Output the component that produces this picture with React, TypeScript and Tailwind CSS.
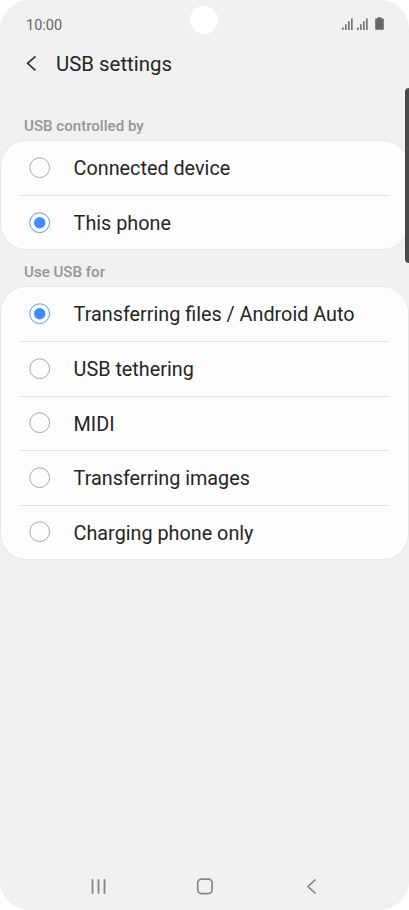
type Option = { label: string; selected?: boolean };

const controlledBy: Option[] = [
  { label: "Connected device" },
  { label: "This phone", selected: true },
];

const useFor: Option[] = [
  { label: "Transferring files / Android Auto", selected: true },
  { label: "USB tethering" },
  { label: "MIDI" },
  { label: "Transferring images" },
  { label: "Charging phone only" },
];

function Signal() {
  return (
    <svg width="11" height="12" viewBox="0 0 11 12" fill="#777777">
      <rect x="0" y="9.4" width="1.7" height="2.6" />
      <rect x="3" y="6.2" width="1.7" height="5.8" />
      <rect x="6" y="3.2" width="1.7" height="8.8" />
      <rect x="9" y="0.3" width="1.7" height="11.7" />
    </svg>
  );
}

function Battery() {
  return (
    <svg className="-mt-px" width="9" height="13" viewBox="0 0 9 13" fill="#666666">
      <path d="M2.4 0.3h4v1.200h1.6q.8 0 .8.8v9.700q0 .8-.8.8H1q-.8 0-.8-.8V2.300q0-.8.8-.8h1.4z" />
    </svg>
  );
}

function Radio({ selected }: { selected?: boolean }) {
  return (
    <svg width="22" height="22" viewBox="0 0 22 22" fill="none">
      <circle cx="10.7" cy="10.7" r="9.9" stroke={selected ? "#5b9bf0" : "#a6a6a6"} strokeWidth="1" />
      {selected && <circle cx="10.7" cy="10.7" r="5.7" fill="#3f8dfb" />}
    </svg>
  );
}

function Group({ options }: { options: Option[] }) {
  return (
    <ul className="mx-px rounded-[25px] bg-[#fdfdfd] px-[19px] shadow-[0_0_0_1px_#e8e8e8]">
      {options.map((o, i) => (
        <li
          key={o.label}
          className={`flex h-[54.4px] items-center gap-[22.6px] pl-[9px] ${i > 0 ? "border-t border-[#e2e2e2]" : ""}`}
        >
          <Radio selected={o.selected} />
          <span className="pt-[2.6px] text-[19.8px] leading-6 whitespace-nowrap text-[#252525]">{o.label}</span>
        </li>
      ))}
    </ul>
  );
}

export default function App() {
  return (
    <div className="h-[910px] w-[409px] overflow-hidden bg-white font-[Roboto,sans-serif]">
      <div className="relative flex h-full flex-col overflow-hidden rounded-[29px] bg-[#f1f1f1]">
        <div className="absolute top-[6px] left-[190px] size-7 rounded-full bg-white" />
        <div className="absolute top-[88px] -right-1 h-[175px] w-2 rounded-[4px] bg-[#494949]" />
        <div className="flex h-12 shrink-0 items-center justify-between pr-[25px] pl-[26px]">
          <span className="pt-[3px] text-[14.5px] text-[#666666]">10:00</span>
          <div className="flex items-center">
            <Signal />
            <span className="w-1" />
            <Signal />
            <span className="w-[7px]" />
            <Battery />
          </div>
        </div>
        <header className="flex h-8 shrink-0 items-center gap-[19px] pl-[26px]">
          <svg className="-mt-[2px]" width="11" height="17" viewBox="0 0 11 17" fill="none" stroke="#333333" strokeWidth="1.7">
            <path d="M9.500 1.300L1.600 8.300L9.500 15.400" />
          </svg>
          <h1 className="text-[20.4px] leading-6 text-[#252525]">USB settings</h1>
        </header>
        <h2 className="mt-[36px] mb-[4.6px] pl-6 text-[15.1px] leading-5 font-medium text-[#969696]">USB controlled by</h2>
        <Group options={controlledBy} />
        <h2 className="mt-[12.6px] mb-[5px] pl-6 text-[15.1px] leading-5 font-medium text-[#969696]">Use USB for</h2>
        <Group options={useFor} />
        <nav className="mt-auto mb-[15px] flex h-[18px] shrink-0 items-center pl-[90px]">
          <svg width="17" height="18" viewBox="0 0 17 18" stroke="#858585" strokeWidth="1.8" strokeLinecap="round">
            <path d="M2.500 3v13M8.500 3v13M14.500 3v13" />
          </svg>
          <svg className="ml-[89px]" width="18" height="18" viewBox="0 0 18 18" fill="none" stroke="#858585" strokeWidth="1.7">
            <rect x="1.700" y="2.200" width="14.400" height="14.400" rx="3.800" />
          </svg>
          <svg className="ml-[92px]" width="11" height="18" viewBox="0 0 11 18" fill="none" stroke="#858585" strokeWidth="1.700">
            <path d="M9.500 2.500L2 9.500L9.500 16.500" />
          </svg>
        </nav>
      </div>
    </div>
  );
}
